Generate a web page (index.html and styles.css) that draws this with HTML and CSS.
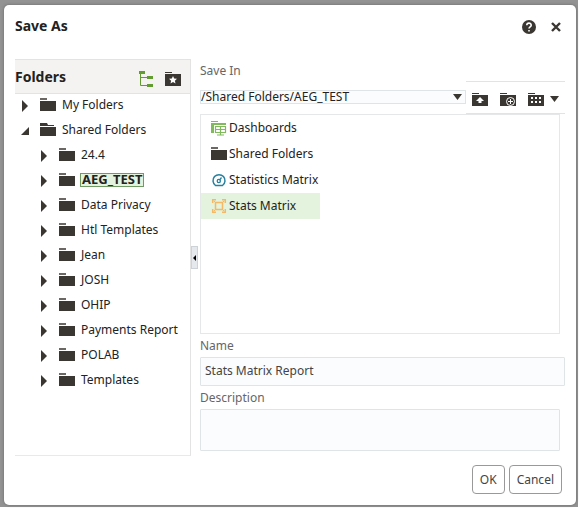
FILE: index.html
```html
<!DOCTYPE html>
<html lang="en">
<head>
<meta charset="utf-8">
<title>Save As</title>
<link rel="stylesheet" href="styles.css">
</head>
<body>
<svg class="defs" aria-hidden="true">
  <symbol id="folder" viewBox="0 0 16 14"><path class="tab" d="M0 0h7v2H0z"/><path d="M0 3h16v10H0z"/></symbol>
  <symbol id="folder-open" viewBox="0 0 16 14"><path d="M0 0h7l1 2h6v1H0z"/><path d="M0 4h16v9H0z"/></symbol>
  <symbol id="right" viewBox="0 0 6 12"><path d="M0 0l6 6-6 6z"/></symbol>
  <symbol id="expanded" viewBox="0 0 8 8"><path d="M8 0v8H0z"/></symbol>
  <symbol id="down" viewBox="0 0 9 6"><path d="M0 0h9L4.500 6z"/></symbol>
</svg>
<div class="backdrop">
<form class="dialog" role="dialog" aria-labelledby="title">
  <header class="titlebar">
    <h1 id="title">Save As</h1>
    <button type="button" class="icon-button" aria-label="Help"><svg width="14" height="14" viewBox="0 0 14 14"><circle cx="7" cy="7" r="7"/><path d="M4.800 5.300C4.800 2.400 9.200 2.400 9.200 5.200 9.200 6.900 7 6.800 7 8.600M7 10v1.500" fill="none" stroke="#fff" stroke-width="1.600"/></svg></button>
    <button type="button" class="icon-button" aria-label="Close"><svg width="10" height="10" viewBox="0 0 10 10"><path d="M1 1l8 8M9 1L1 9" fill="none" stroke="#3a3631" stroke-width="2.400"/></svg></button>
  </header>
  <div class="content">
    <section class="folders">
      <div class="folders-head">
        <h2>Folders</h2>
        <button type="button" class="icon-button" aria-label="Tree view"><svg width="14" height="16" viewBox="0 0 14 16"><g fill="#629b2f"><path d="M0 0h6v3H0zM8 5h6v3H8zM8 13h6v3H8z"/><path d="M1.500 3v11.500H8M1.500 6.500H8" fill="none" stroke="#629b2f"/></g></svg></button>
        <button type="button" class="icon-button" aria-label="Favorites"><svg width="16" height="14" viewBox="0 0 16 14"><path d="M0 0h7v1H0zM0 2h16v12H0z"/><path fill="#fff" d="M8 4l1.200 2.500 2.800.3-2.100 1.900.6 2.800L8 10.100l-2.500 1.400.6-2.800L4 6.800l2.800-.3z"/></svg></button>
      </div>
      <ul class="tree">
        <li><div class="node"><button type="button" class="toggle" aria-label="Expand My Folders"><svg width="6" height="12"><use href="#right"/></svg></button><svg class="folder" width="16" height="14"><use href="#folder"/></svg><span>My Folders</span></div></li>
        <li><div class="node"><button type="button" class="toggle" aria-label="Collapse Shared Folders"><svg width="8" height="8"><use href="#expanded"/></svg></button><svg class="folder" width="16" height="14"><use href="#folder-open"/></svg><span>Shared Folders</span></div>
          <ul>
            <li class="node"><button type="button" class="toggle" aria-label="Expand 24.4"><svg width="6" height="12"><use href="#right"/></svg></button><svg class="folder" width="16" height="14"><use href="#folder"/></svg><span>24.4</span></li>
            <li class="node current"><button type="button" class="toggle" aria-label="Expand AEG_TEST"><svg width="6" height="12"><use href="#right"/></svg></button><svg class="folder" width="16" height="14"><use href="#folder"/></svg><span>AEG_TEST</span></li>
            <li class="node"><button type="button" class="toggle" aria-label="Expand Data Privacy"><svg width="6" height="12"><use href="#right"/></svg></button><svg class="folder" width="16" height="14"><use href="#folder"/></svg><span>Data Privacy</span></li>
            <li class="node"><button type="button" class="toggle" aria-label="Expand Htl Templates"><svg width="6" height="12"><use href="#right"/></svg></button><svg class="folder" width="16" height="14"><use href="#folder"/></svg><span>Htl Templates</span></li>
            <li class="node"><button type="button" class="toggle" aria-label="Expand Jean"><svg width="6" height="12"><use href="#right"/></svg></button><svg class="folder" width="16" height="14"><use href="#folder"/></svg><span>Jean</span></li>
            <li class="node"><button type="button" class="toggle" aria-label="Expand JOSH"><svg width="6" height="12"><use href="#right"/></svg></button><svg class="folder" width="16" height="14"><use href="#folder"/></svg><span>JOSH</span></li>
            <li class="node"><button type="button" class="toggle" aria-label="Expand OHIP"><svg width="6" height="12"><use href="#right"/></svg></button><svg class="folder" width="16" height="14"><use href="#folder"/></svg><span>OHIP</span></li>
            <li class="node"><button type="button" class="toggle" aria-label="Expand Payments Report"><svg width="6" height="12"><use href="#right"/></svg></button><svg class="folder" width="16" height="14"><use href="#folder"/></svg><span>Payments Report</span></li>
            <li class="node"><button type="button" class="toggle" aria-label="Expand POLAB"><svg width="6" height="12"><use href="#right"/></svg></button><svg class="folder" width="16" height="14"><use href="#folder"/></svg><span>POLAB</span></li>
            <li class="node"><button type="button" class="toggle" aria-label="Expand Templates"><svg width="6" height="12"><use href="#right"/></svg></button><svg class="folder" width="16" height="14"><use href="#folder"/></svg><span>Templates</span></li>
          </ul>
        </li>
      </ul>
    </section>
    <div class="splitter"><button type="button" class="collapse" aria-label="Collapse folders"><svg width="3" height="6" viewBox="0 0 3 6"><path d="M3 0v6L0 3z" fill="#000"/></svg></button></div>
    <section class="details">
      <label for="path">Save In</label>
      <div class="location">
        <div class="path-field">
          <select id="path"><option>/Shared Folders/AEG_TEST</option></select>
          <svg class="caret" width="9" height="6"><use href="#down"/></svg>
        </div>
        <div class="toolbar">
          <button type="button" class="icon-button" aria-label="Up one level"><svg width="16" height="13" viewBox="0 0 16 13"><path d="M0 0h7v1H0zM0 2h16v11H0z"/><path fill="#fff" d="M8 4l4 4H9.500v2h-3V8H4z"/></svg></button>
          <button type="button" class="icon-button" aria-label="New folder"><svg width="16" height="13" viewBox="0 0 16 13"><path d="M0 0h7v1H0zM0 2h16v11H0z"/><circle cx="10.500" cy="8.500" r="4" fill="none" stroke="#fff"/><path d="M10.500 6v5M8 8.500h5" stroke="#fff"/></svg></button>
          <button type="button" class="icon-button view" aria-label="Change view"><svg width="16" height="13" viewBox="0 0 16 13"><path d="M0 0h7v1H0zM0 2h16v11H0z"/><path fill="#fff" d="M3 4h2v2H3zM7 4h2v2H7zM11 4h2v2h-2zM3 8h2v2H3zM7 8h2v2H7zM11 8h2v2h-2z"/></svg><svg width="9" height="6"><use href="#down"/></svg></button>
        </div>
      </div>
      <ul class="items">
        <li><svg width="16" height="15" viewBox="0 0 16 15"><g fill="#81b95d"><path d="M0 0h7v1H0zM0 2h15v2H3v8H0z"/><path d="M4.500 5.500h10v6h-10zM4.500 8.500h10M9.500 5.500v8M6 14h7" fill="none" stroke="#81b95d" stroke-width="1.200"/></g></svg><span>Dashboards</span></li>
        <li><svg width="16" height="14"><use href="#folder"/></svg><span>Shared Folders</span></li>
        <li><svg width="16" height="14" viewBox="0 0 16 14"><g fill="none" stroke="#25809f"><path d="M4.500 12.500a6 6 0 1 1 7 0z" stroke-width="1.500"/><circle cx="7.800" cy="8" r="1.600" stroke-width="1.300"/><path d="M8.500 7.200L10.500 4.500" stroke-width="1.300"/></g></svg><span>Statistics Matrix</span></li>
        <li class="selected"><svg width="16" height="14" viewBox="0 0 16 14"><g fill="none" stroke="#f4b866" stroke-width="1.500"><path d="M1.700 4V.8H5M11 .8h3.300V4M14.300 10v3.200H11M5 13.200H1.700V10M4.500 3.500h7v7h-7z"/><path d="M3 2l1.500 1.500M13 2l-1.500 1.500M3 12l1.500-1.500M13 12l-1.500-1.500" stroke-width="1"/></g></svg><span>Stats Matrix</span></li>
      </ul>
      <label for="name">Name</label>
      <input id="name" type="text" value="Stats Matrix Report">
      <label for="description">Description</label>
      <textarea id="description"></textarea>
    </section>
  </div>
  <footer class="actions">
    <button type="submit">OK</button>
    <button type="button">Cancel</button>
  </footer>
</form>
</div>
</body>
</html>
```
FILE: styles.css
```css
* { box-sizing: border-box; }

body {
  margin: 0;
  padding: 0 2px 1px 0;
  background: #fff;
  color: #222;
  font: 12px/16px "Noto Sans", sans-serif;
}

h1, h2, ul { margin: 0; padding: 0; }
ul { list-style: none; }
button, input, select, textarea { margin: 0; font: inherit; color: inherit; }
svg { flex: none; display: block; fill: #3a3631; }
.defs { position: absolute; width: 0; height: 0; }
.tab { fill: #6b6863; }

.backdrop {
  min-height: calc(100vh - 1px);
  padding: 5px 2px 2px 4px;
  background: #939393;
}

.dialog {
  padding: 9px 11px 11px;
  background: #fff;
  border-radius: 5px;
  box-shadow: 0 0 3px #666;
}

.titlebar {
  display: flex;
  align-items: center;
  gap: 15px;
  height: 25px;
  margin-bottom: 20px;
  padding-right: 4px;
}

h1, h2 { flex: 1; font-size: 14px; line-height: 16px; }
h1 { padding-bottom: 1px; }
h2 { padding-bottom: 4px; }

.icon-button, .toggle, .collapse {
  display: flex;
  align-items: center;
  justify-content: center;
  padding: 0;
  border: 0;
  background: none;
}

.content { display: flex; }

.folders {
  flex: 0 0 176px;
  min-height: 397px;
  border-right: 1px solid #e3e3e3;
  border-bottom: 1px solid #e8e9ea;
}

.folders-head {
  display: flex;
  align-items: center;
  gap: 12px;
  height: 35px;
  padding: 4px 9px 0 0;
  border-top: 1px solid #e3e3e3;
  border-bottom: 1px solid #e3e3e3;
  background: #f4f3f2;
}

.tree ul { padding-left: 19px; }
.node { display: flex; align-items: center; height: 25px; padding: 0 0 3px 5px; }
.toggle { width: 10px; margin-right: 10px; padding-top: 2px; }
.folder { margin-right: 5px; }
.node span { padding: 0 1px; white-space: nowrap; }

.node.current span {
  padding-bottom: 2px;
  border: 1px solid #6f9a63;
  background: #e4f3dd;
  font-size: 13px;
  font-weight: bold;
  line-height: 10px;
}

.splitter { display: flex; flex: 0 0 9px; align-items: center; }
.collapse { width: 7px; height: 23px; border: 1px solid #ccd2d8; background: #e5e9ed; }

.details { display: flex; flex: 1; flex-direction: column; min-width: 0; }
.details label { color: #666; }
.details > label:first-child { margin: 4px 0 2px; }

.location { display: flex; align-items: center; }
.path-field { display: grid; flex: 1; align-items: center; padding-bottom: 2px; }
.path-field > * { grid-area: 1 / 1; }
.caret { justify-self: end; margin-right: 4px; pointer-events: none; }

select {
  width: 100%;
  height: 14px;
  padding: 0 16px 0 0;
  border: 1px solid #dfe4e7;
  background: #fbfcfe;
  appearance: none;
  line-height: 12px;
}

.toolbar {
  display: flex;
  align-items: center;
  gap: 12px;
  height: 33px;
  padding: 3px 6px 0;
  border-top: 1px solid #dfe4e7;
  border-bottom: 1px solid #dfe4e7;
}
.view { gap: 6px; }

.items {
  height: 220px;
  margin: 0 5px 4px 0;
  border: 1px solid #e5e8e9;
}
.items li {
  display: flex;
  align-items: center;
  width: 119px;
  height: 26px;
  padding-left: 10px;
  gap: 2px;
  white-space: nowrap;
}
.items .selected { background: #e4f3dd; }

input, textarea {
  border: 1px solid #dfe4e7;
  border-radius: 1px;
  background: #fbfcfe;
  color: #444;
}
input { width: 100%; height: 29px; margin: 3px 0 4px; padding: 0 4px 2px; }
textarea { display: block; height: 42px; margin: 3px 5px 0 0; padding: 4px; resize: none; }

.actions { display: flex; justify-content: flex-end; gap: 4px; padding: 9px 3px 0; }
.actions button {
  height: 29px;
  padding: 0 7px;
  border: 1px solid #999;
  border-radius: 4px;
  background: #fff;
  color: #444;
}
```
